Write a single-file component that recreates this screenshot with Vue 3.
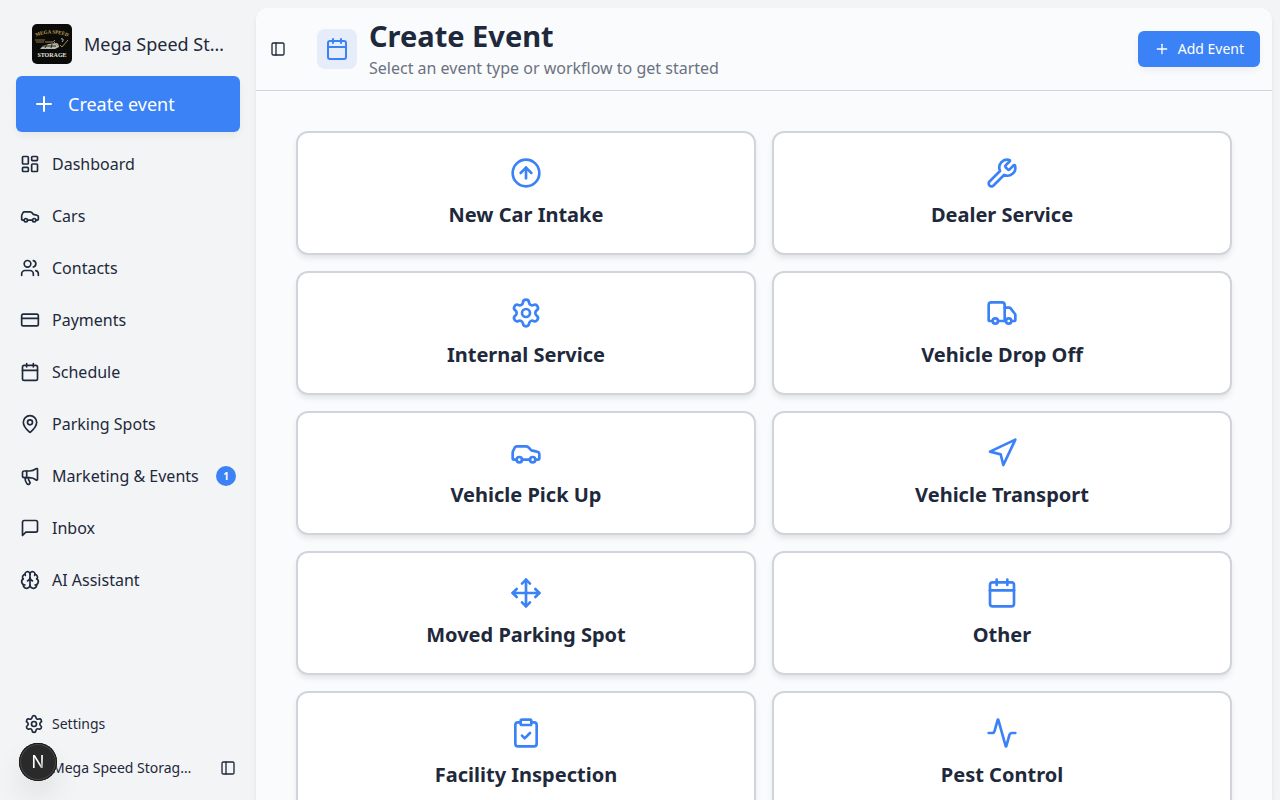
<script setup>
const icons = {
    plus: '<path d="M5 12h14"/><path d="M12 5v14"/>',
    dashboard: '<rect width="7" height="9" x="3" y="3" rx="1"/><rect width="7" height="5" x="14" y="3" rx="1"/><rect width="7" height="9" x="14" y="12" rx="1"/><rect width="7" height="5" x="3" y="16" rx="1"/>',
    car: '<path d="M19 17h2c.6 0 1-.4 1-1v-3c0-.9-.7-1.7-1.5-1.9C18.7 10.6 16 10 16 10s-1.3-1.4-2.2-2.3c-.5-.4-1.1-.7-1.8-.7H5c-.6 0-1.1.4-1.4.9l-1.4 2.9A3.7 3.7 0 0 0 2 12v4c0 .6.4 1 1 1h2"/><circle cx="7" cy="17" r="2"/><path d="M9 17h6"/><circle cx="17" cy="17" r="2"/>',
    users: '<path d="M16 21v-2a4 4 0 0 0-4-4H6a4 4 0 0 0-4 4v2"/><circle cx="9" cy="7" r="4"/><path d="M22 21v-2a4 4 0 0 0-3-3.87"/><path d="M16 3.13a4 4 0 0 1 0 7.75"/>',
    card: '<rect width="20" height="14" x="2" y="5" rx="2"/><path d="M2 10h20"/>',
    calendar: '<path d="M8 2v4"/><path d="M16 2v4"/><rect width="18" height="18" x="3" y="4" rx="2"/><path d="M3 10h18"/>',
    pin: '<path d="M20 10c0 4.993-5.539 10.193-7.399 11.799a1 1 0 0 1-1.202 0C9.539 20.193 4 14.993 4 10a8 8 0 0 1 16 0"/><circle cx="12" cy="10" r="3"/>',
    megaphone: '<path d="M11 6a13 13 0 0 0 8.4-2.8A1 1 0 0 1 21 4v12a1 1 0 0 1-1.6.8A13 13 0 0 0 11 14H5a2 2 0 0 1-2-2V8a2 2 0 0 1 2-2z"/><path d="M6 14a12 12 0 0 0 2.4 7.2 2 2 0 0 0 3.2-2.4A8 8 0 0 1 10 14"/><path d="M8 6v8"/>',
    message: '<path d="M21 15a2 2 0 0 1-2 2H7l-4 4V5a2 2 0 0 1 2-2h14a2 2 0 0 1 2 2z"/>',
    brain: '<path d="M12 18V5"/><path d="M15 13a4.17 4.17 0 0 1-3-4 4.17 4.17 0 0 1-3 4"/><path d="M17.598 6.5A3 3 0 1 0 12 5a3 3 0 1 0-5.598 1.5"/><path d="M17.997 5.125a4 4 0 0 1 2.526 5.77"/><path d="M18 18a4 4 0 0 0 2-7.464"/><path d="M19.967 17.483A4 4 0 1 1 12 18a4 4 0 1 1-7.967-.517"/><path d="M6 18a4 4 0 0 1-2-7.464"/><path d="M6.003 5.125a4 4 0 0 0-2.526 5.77"/>',
    settings: '<path d="M9.671 4.136a2.34 2.34 0 0 1 4.659 0 2.34 2.34 0 0 0 3.319 1.915 2.34 2.34 0 0 1 2.33 4.033 2.34 2.34 0 0 0 0 3.831 2.34 2.34 0 0 1-2.33 4.033 2.34 2.34 0 0 0-3.319 1.915 2.34 2.34 0 0 1-4.659 0 2.34 2.34 0 0 0-3.32-1.915 2.34 2.34 0 0 1-2.33-4.033 2.34 2.34 0 0 0 0-3.831A2.34 2.34 0 0 1 6.35 6.051a2.34 2.34 0 0 0 3.319-1.915"/><circle cx="12" cy="12" r="3"/>',
    panel: '<rect width="18" height="18" x="3" y="3" rx="2"/><path d="M9 3v18"/>',
    arrowUp: '<circle cx="12" cy="12" r="10"/><path d="m16 12-4-4-4 4"/><path d="M12 16V8"/>',
    wrench: '<path d="M14.7 6.3a1 1 0 0 0 0 1.4l1.6 1.6a1 1 0 0 0 1.4 0l3.106-3.105c.32-.322.863-.22.983.218a6 6 0 0 1-8.259 7.057l-7.91 7.91a1 1 0 0 1-2.999-3l7.91-7.91a6 6 0 0 1 7.057-8.259c.438.12.54.662.219.984z"/>',
    truck: '<path d="M14 18V6a2 2 0 0 0-2-2H4a2 2 0 0 0-2 2v11a1 1 0 0 0 1 1h2"/><path d="M15 18H9"/><path d="M19 18h2a1 1 0 0 0 1-1v-3.65a1 1 0 0 0-.22-.624l-3.48-4.35A1 1 0 0 0 17.52 8H14"/><circle cx="17" cy="18" r="2"/><circle cx="7" cy="18" r="2"/>',
    navigation: '<path d="M3 11 22 2l-9 19-2-8z"/>',
    move: '<path d="M12 2v20"/><path d="m15 19-3 3-3-3"/><path d="m19 9 3 3-3 3"/><path d="M2 12h20"/><path d="m5 9-3 3 3 3"/><path d="m9 5 3-3 3 3"/>',
    clipboard: '<rect width="8" height="4" x="8" y="2" rx="1"/><path d="M16 4h2a2 2 0 0 1 2 2v14a2 2 0 0 1-2 2H6a2 2 0 0 1-2-2V6a2 2 0 0 1 2-2h2"/><path d="m9 14 2 2 4-4"/>',
    activity: '<path d="M22 12h-2.48a2 2 0 0 0-1.93 1.46l-2.35 8.36a.25.25 0 0 1-.48 0L9.24 2.18a.25.25 0 0 0-.48 0l-2.35 8.36A2 2 0 0 1 4.49 12H2"/>'
}

const navItems = [
    { label: 'Dashboard', icon: 'dashboard' },
    { label: 'Cars', icon: 'car' },
    { label: 'Contacts', icon: 'users' },
    { label: 'Payments', icon: 'card' },
    { label: 'Schedule', icon: 'calendar' },
    { label: 'Parking Spots', icon: 'pin' },
    { label: 'Marketing & Events', icon: 'megaphone', badge: 1 },
    { label: 'Inbox', icon: 'message' },
    { label: 'AI Assistant', icon: 'brain' }
]

const eventTypes = [
    { label: 'New Car Intake', icon: 'arrowUp' },
    { label: 'Dealer Service', icon: 'wrench' },
    { label: 'Internal Service', icon: 'settings' },
    { label: 'Vehicle Drop Off', icon: 'truck' },
    { label: 'Vehicle Pick Up', icon: 'car' },
    { label: 'Vehicle Transport', icon: 'navigation' },
    { label: 'Moved Parking Spot', icon: 'move' },
    { label: 'Other', icon: 'calendar' },
    { label: 'Facility Inspection', icon: 'clipboard' },
    { label: 'Pest Control', icon: 'activity' }
]
</script>

<template>
    <div class="layout">
        <aside class="sidebar">
            <div class="brand">
                <svg class="logo" viewBox="0 0 40 40" aria-hidden="true">
                    <rect width="40" height="40" rx="5" fill="#0b0c0a" />
                    <path id="logo-arc" d="M1 14Q20 5 39 14" fill="none" />
                    <text class="logo-top" text-anchor="middle"><textPath href="#logo-arc" startOffset="50%">MEGA SPEED</textPath></text>
                    <path d="M3 16h10M4 18h8" stroke="#8b7440" />
                    <path d="M9 24c2-3 5-3 8-4l7-1c2 0 3 2 3 4l-4 2H8z" fill="#b9b9ac" />
                    <path d="M10 22h14M15 20l-2 4M20 20l-1 4" stroke="#262720" />
                    <path d="M13 18h8l2-2M22 18l4 4M28 21l2 2 6-7" fill="none" stroke="#a08a50" />
                    <path d="M29 15c2-1 3 1 1 3" fill="none" stroke="#c9c7b9" />
                    <text class="logo-bottom" x="20" y="33" text-anchor="middle">STORAGE</text>
                </svg>
                <span class="brand-name">Mega Speed Storage</span>
            </div>
            <button type="button" class="create-btn">
                <svg class="icon icon-md" viewBox="0 0 24 24" v-html="icons.plus"></svg>
                Create event
            </button>
            <nav class="nav">
                <a v-for="item in navItems" :key="item.label" href="#" class="nav-item">
                    <svg class="icon icon-sm" viewBox="0 0 24 24" v-html="icons[item.icon]"></svg>
                    <span>{{ item.label }}</span>
                    <span v-if="item.badge" class="badge">{{ item.badge }}</span>
                </a>
            </nav>
            <div class="sidebar-footer">
                <a href="#" class="footer-row">
                    <svg class="icon icon-sm" viewBox="0 0 24 24" v-html="icons.settings"></svg>
                    <span>Settings</span>
                </a>
                <div class="footer-row account">
                    <span class="account-name">Mega Speed Storage LLC</span>
                    <button type="button" class="icon-btn" aria-label="Toggle sidebar">
                        <svg class="icon icon-xs" viewBox="0 0 24 24" v-html="icons.panel"></svg>
                    </button>
                </div>
            </div>
        </aside>

        <main class="main">
            <header class="header">
                <button type="button" class="icon-btn" aria-label="Toggle sidebar">
                    <svg class="icon icon-xs" viewBox="0 0 24 24" v-html="icons.panel"></svg>
                </button>
                <span class="header-icon">
                    <svg class="icon icon-md" viewBox="0 0 24 24" v-html="icons.calendar"></svg>
                </span>
                <div class="heading">
                    <h1>Create Event</h1>
                    <p>Select an event type or workflow to get started</p>
                </div>
                <button type="button" class="add-btn">
                    <svg class="icon icon-xs" viewBox="0 0 24 24" v-html="icons.plus"></svg>
                    Add Event
                </button>
            </header>
            <div class="content">
                <button v-for="type in eventTypes" :key="type.label" type="button" class="event-card">
                    <svg class="icon icon-lg" viewBox="0 0 24 24" v-html="icons[type.icon]"></svg>
                    <span>{{ type.label }}</span>
                </button>
            </div>
        </main>

        <button type="button" class="dev-badge" aria-label="Developer tools">
            <svg viewBox="0 0 38 38">
                <defs>
                    <linearGradient id="dev-fade" x1="0" y1="0" x2="1" y2="1">
                        <stop offset="0.6" stop-color="#fff" />
                        <stop offset="1" stop-color="#fff" stop-opacity="0.2" />
                    </linearGradient>
                </defs>
                <text x="19" y="25" text-anchor="middle" fill="url(#dev-fade)">N</text>
            </svg>
        </button>
    </div>
</template>

<style>
body { margin: 0; background: #f3f4f6; }
</style>

<style scoped>
.layout { display: flex; height: 100vh; overflow: hidden; color: #1e293b; background: #f3f4f6; font-family: "Noto Sans", sans-serif; font-size: 16px; line-height: 24px; }
.layout * { box-sizing: border-box; }
button { padding: 0; border: 0; background: none; color: inherit; font: inherit; cursor: pointer; }
a { color: inherit; text-decoration: none; }

.icon { flex: none; fill: none; stroke: currentColor; stroke-width: 2; stroke-linecap: round; stroke-linejoin: round; }
.icon-xs { width: 16px; height: 16px; }
.icon-sm { width: 20px; height: 20px; }
.icon-md { width: 24px; height: 24px; }
.icon-lg { width: 32px; height: 32px; color: #3b82f6; }
.icon-btn { display: flex; align-items: center; justify-content: center; width: 28px; height: 28px; color: #1e293b; }

.sidebar { flex: none; display: flex; flex-direction: column; width: 256px; padding: 24px 16px 10px; }
.brand { display: flex; align-items: center; gap: 12px; padding: 0 16px; }
.logo { flex: none; width: 40px; height: 40px; }
.logo-top { fill: #c6a552; font-family: "Liberation Serif", serif; font-size: 5px; font-weight: 700; }
.logo-bottom { fill: #e5e5df; font-family: "Liberation Serif", serif; font-size: 6px; font-weight: 700; }
.brand-name { overflow: hidden; font-size: 18px; line-height: 28px; text-overflow: ellipsis; white-space: nowrap; }
.create-btn { display: flex; flex: none; align-items: center; gap: 12px; height: 56px; margin-top: 12px; padding: 0 16px; color: #fff; background: #3b82f6; border-radius: 6px; box-shadow: 0 4px 8px -1px rgba(0, 0, 0, .06); font-size: 18px; }
.nav { display: flex; flex-direction: column; gap: 8px; margin-top: 10px; }
.nav-item { display: flex; align-items: center; gap: 12px; height: 44px; padding: 0 4px; }
.badge { width: 20px; height: 20px; margin-left: auto; color: #fff; background: #3b82f6; border-radius: 50%; font-size: 10px; font-weight: 700; line-height: 20px; text-align: center; }
.sidebar-footer { margin-top: auto; font-size: 14px; }
.footer-row { display: flex; align-items: center; gap: 8px; height: 44px; padding: 0 8px; }
.account { justify-content: space-between; padding: 0 0 0 36px; }
.account-name { width: 140px; overflow: hidden; text-overflow: ellipsis; white-space: nowrap; }
.account .icon-btn { width: 24px; }

.main { flex: 1; display: flex; flex-direction: column; min-width: 0; margin: 8px 8px 0 0; overflow: hidden; background: #fafbfd; border-radius: 12px 12px 0 0; box-shadow: 0 4px 6px -1px rgba(0, 0, 0, .1); }
.header { flex: none; display: flex; align-items: center; padding: 10px 12px 10px 8px; border-bottom: 1px solid #d1d5db; }
.header-icon { display: flex; align-items: center; justify-content: center; width: 40px; height: 40px; margin-left: 25px; color: #3b82f6; background: #e6ecfa; border-radius: 8px; }
.heading { margin-left: 12px; }
.heading h1 { margin: 0; font-size: 29px; font-weight: 700; line-height: 36px; }
.heading p { margin: 2px 0 0; color: #6b7280; }
.add-btn { display: flex; align-items: center; gap: 8px; height: 36px; margin-left: auto; padding: 0 16px; color: #fff; background: #3b82f6; border-radius: 6px; box-shadow: 0 4px 8px -1px rgba(0, 0, 0, .06); font-size: 14px; }
.content { display: grid; grid-template-columns: repeat(2, minmax(0, 1fr)); gap: 16px; padding: 40px; overflow-y: auto; scrollbar-width: none; }
.event-card { display: flex; flex-direction: column; align-items: center; gap: 12px; padding: 24px; background: #fff; border: 2px solid #d1d5db; border-radius: 12px; box-shadow: 0 4px 6px -1px rgba(0, 0, 0, .1); font-size: 20px; font-weight: 700; line-height: 28px; }

.dev-badge { position: fixed; bottom: 19px; left: 19px; width: 38px; height: 38px; background: #2a2a2a; border-radius: 50%; box-shadow: inset 0 0 0 1px #171717, inset 0 0 0 2px #484848, 0 16px 32px -8px rgba(0, 0, 0, .24); }
.dev-badge svg { display: block; width: 38px; height: 38px; }
.dev-badge text { font-family: Inter, sans-serif; font-size: 17px; font-weight: 400; }
</style>
